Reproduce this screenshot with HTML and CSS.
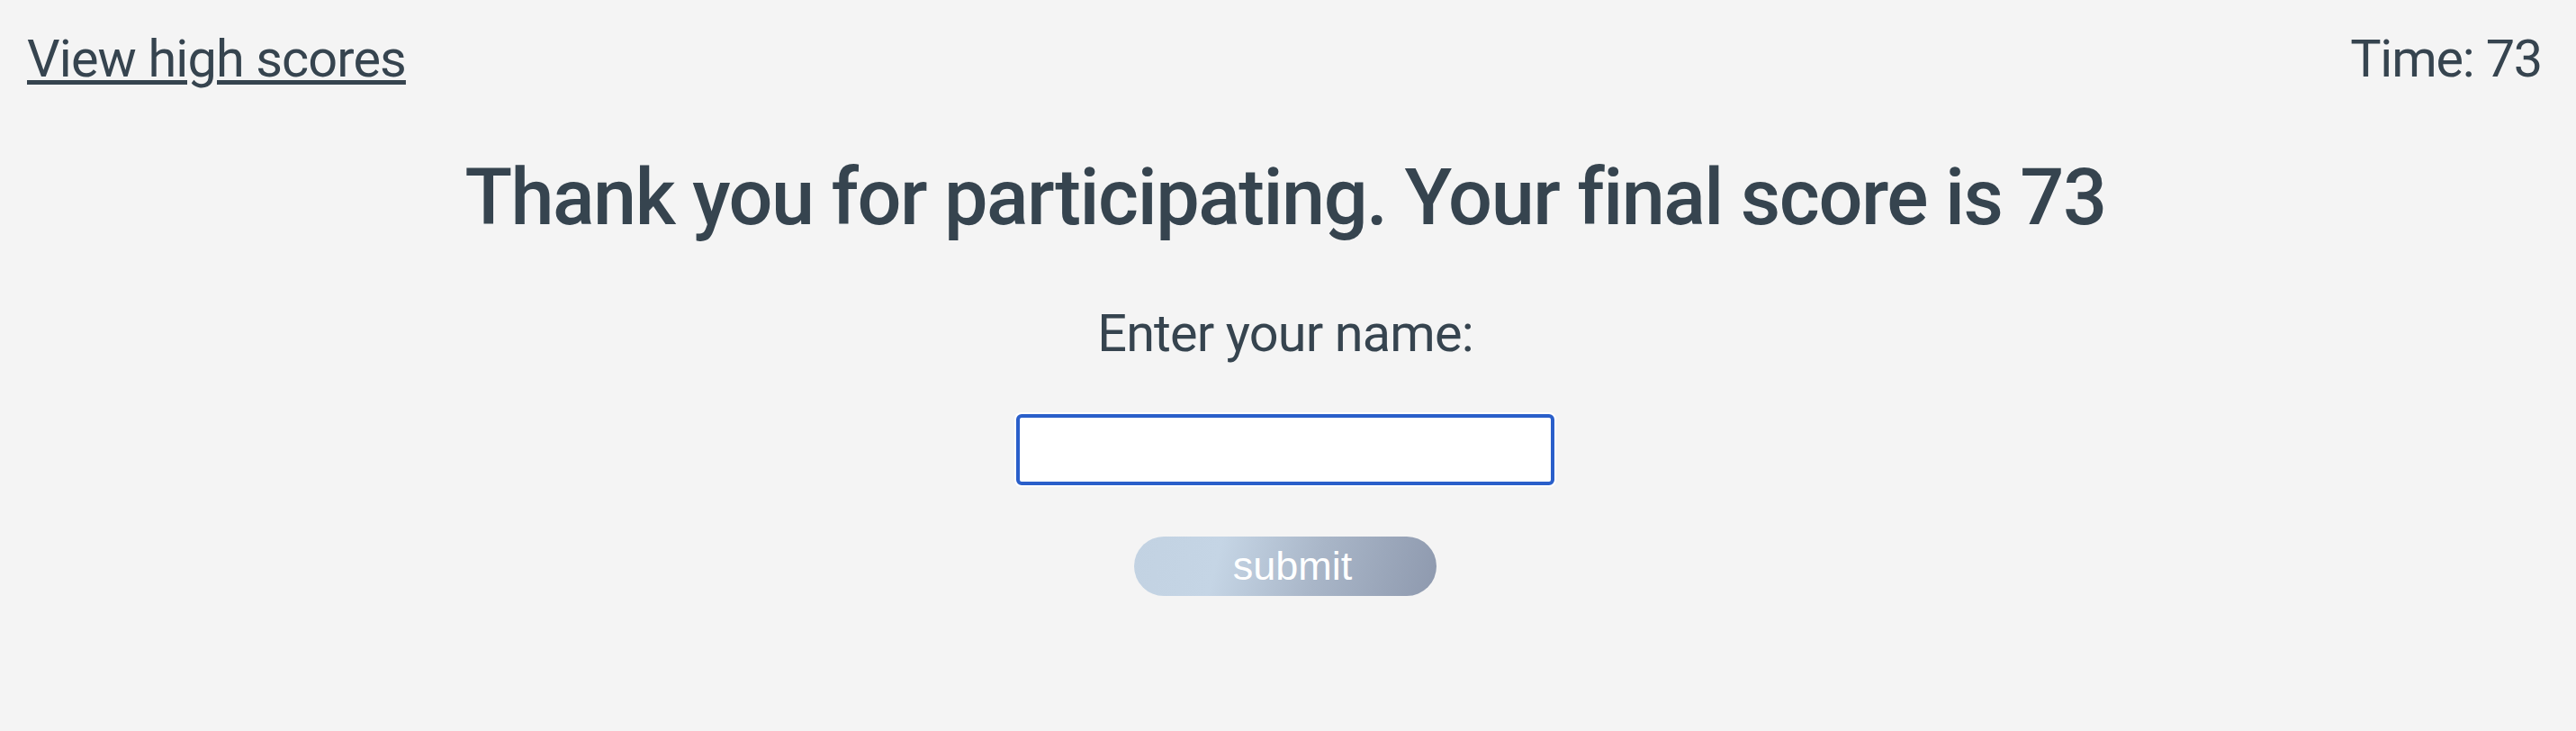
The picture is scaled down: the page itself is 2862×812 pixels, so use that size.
FILE: index.html
```html
<!DOCTYPE html>
<html lang="en">
<head>
<meta charset="utf-8">
<title>Quiz - Final score</title>
<link rel="stylesheet" href="styles.css">
</head>
<body>
  <header class="top-bar">
    <a class="scores-link" href="#">View high scores</a>
    <div class="timer">Time: 73</div>
  </header>
  <main class="result">
    <h1 class="result-title">Thank you for participating. Your final score is 73</h1>
    <form class="score-form" onsubmit="return false;">
      <label class="name-label" for="initials">Enter your name:</label>
      <input class="name-input" id="initials" type="text">
      <button class="submit-btn" type="submit">submit</button>
    </form>
  </main>
</body>
</html>
```
FILE: styles.css
```css
html, body {
  margin: 0;
  padding: 0;
  background: #f4f4f4;
}

body {
  font-family: Roboto, "Noto Sans", Arial, sans-serif;
  color: #36444f;
  width: 2862px;
  height: 812px;
  overflow: hidden;
}

.top-bar {
  display: flex;
  justify-content: space-between;
  align-items: flex-start;
  padding: 32px 39px 0 30px;
  height: 68px;
}

.scores-link {
  font-size: 57.6px;
  line-height: 68px;
  letter-spacing: -0.87px;
  color: #36444f;
  text-decoration: underline;
  text-decoration-thickness: 4.5px;
  text-underline-offset: 3.5px;
}

.timer {
  font-size: 57.6px;
  line-height: 68px;
  letter-spacing: -1.2px;
  margin-right: -1px;
}

.result {
  display: flex;
  flex-direction: column;
  align-items: center;
  padding-right: 6px;
}

.result-title {
  margin: 69px 0 0 0;
  font-size: 86.4px;
  font-weight: 500;
  line-height: 101px;
  letter-spacing: -1.5px;
  text-align: center;
}

.score-form {
  display: flex;
  flex-direction: column;
  align-items: center;
}

.name-label {
  margin-top: 67px;
  font-size: 57.6px;
  line-height: 68px;
  letter-spacing: -0.85px;
}

.name-input {
  box-sizing: border-box;
  margin-top: 55px;
  width: 598px;
  height: 79px;
  border: 4px solid #2a5fca;
  border-radius: 6px;
  background: #ffffff;
  box-shadow: 0 0 0 2px #ffffff;
  outline: none;
  font-size: 40px;
  padding: 0 12px;
}

.submit-btn {
  box-sizing: border-box;
  margin-top: 57px;
  width: 336px;
  height: 66px;
  padding: 0 0 0 16px;
  border: none;
  border-radius: 33px;
  background: linear-gradient(105deg, #c2d2e2 0%, #c5d5e5 28%, #a9b6c8 60%, #8e99ae 100%);
  color: #ffffff;
  font-family: "Liberation Sans", Arial, sans-serif;
  font-size: 45px;
  line-height: 66px;
  cursor: pointer;
}
```
